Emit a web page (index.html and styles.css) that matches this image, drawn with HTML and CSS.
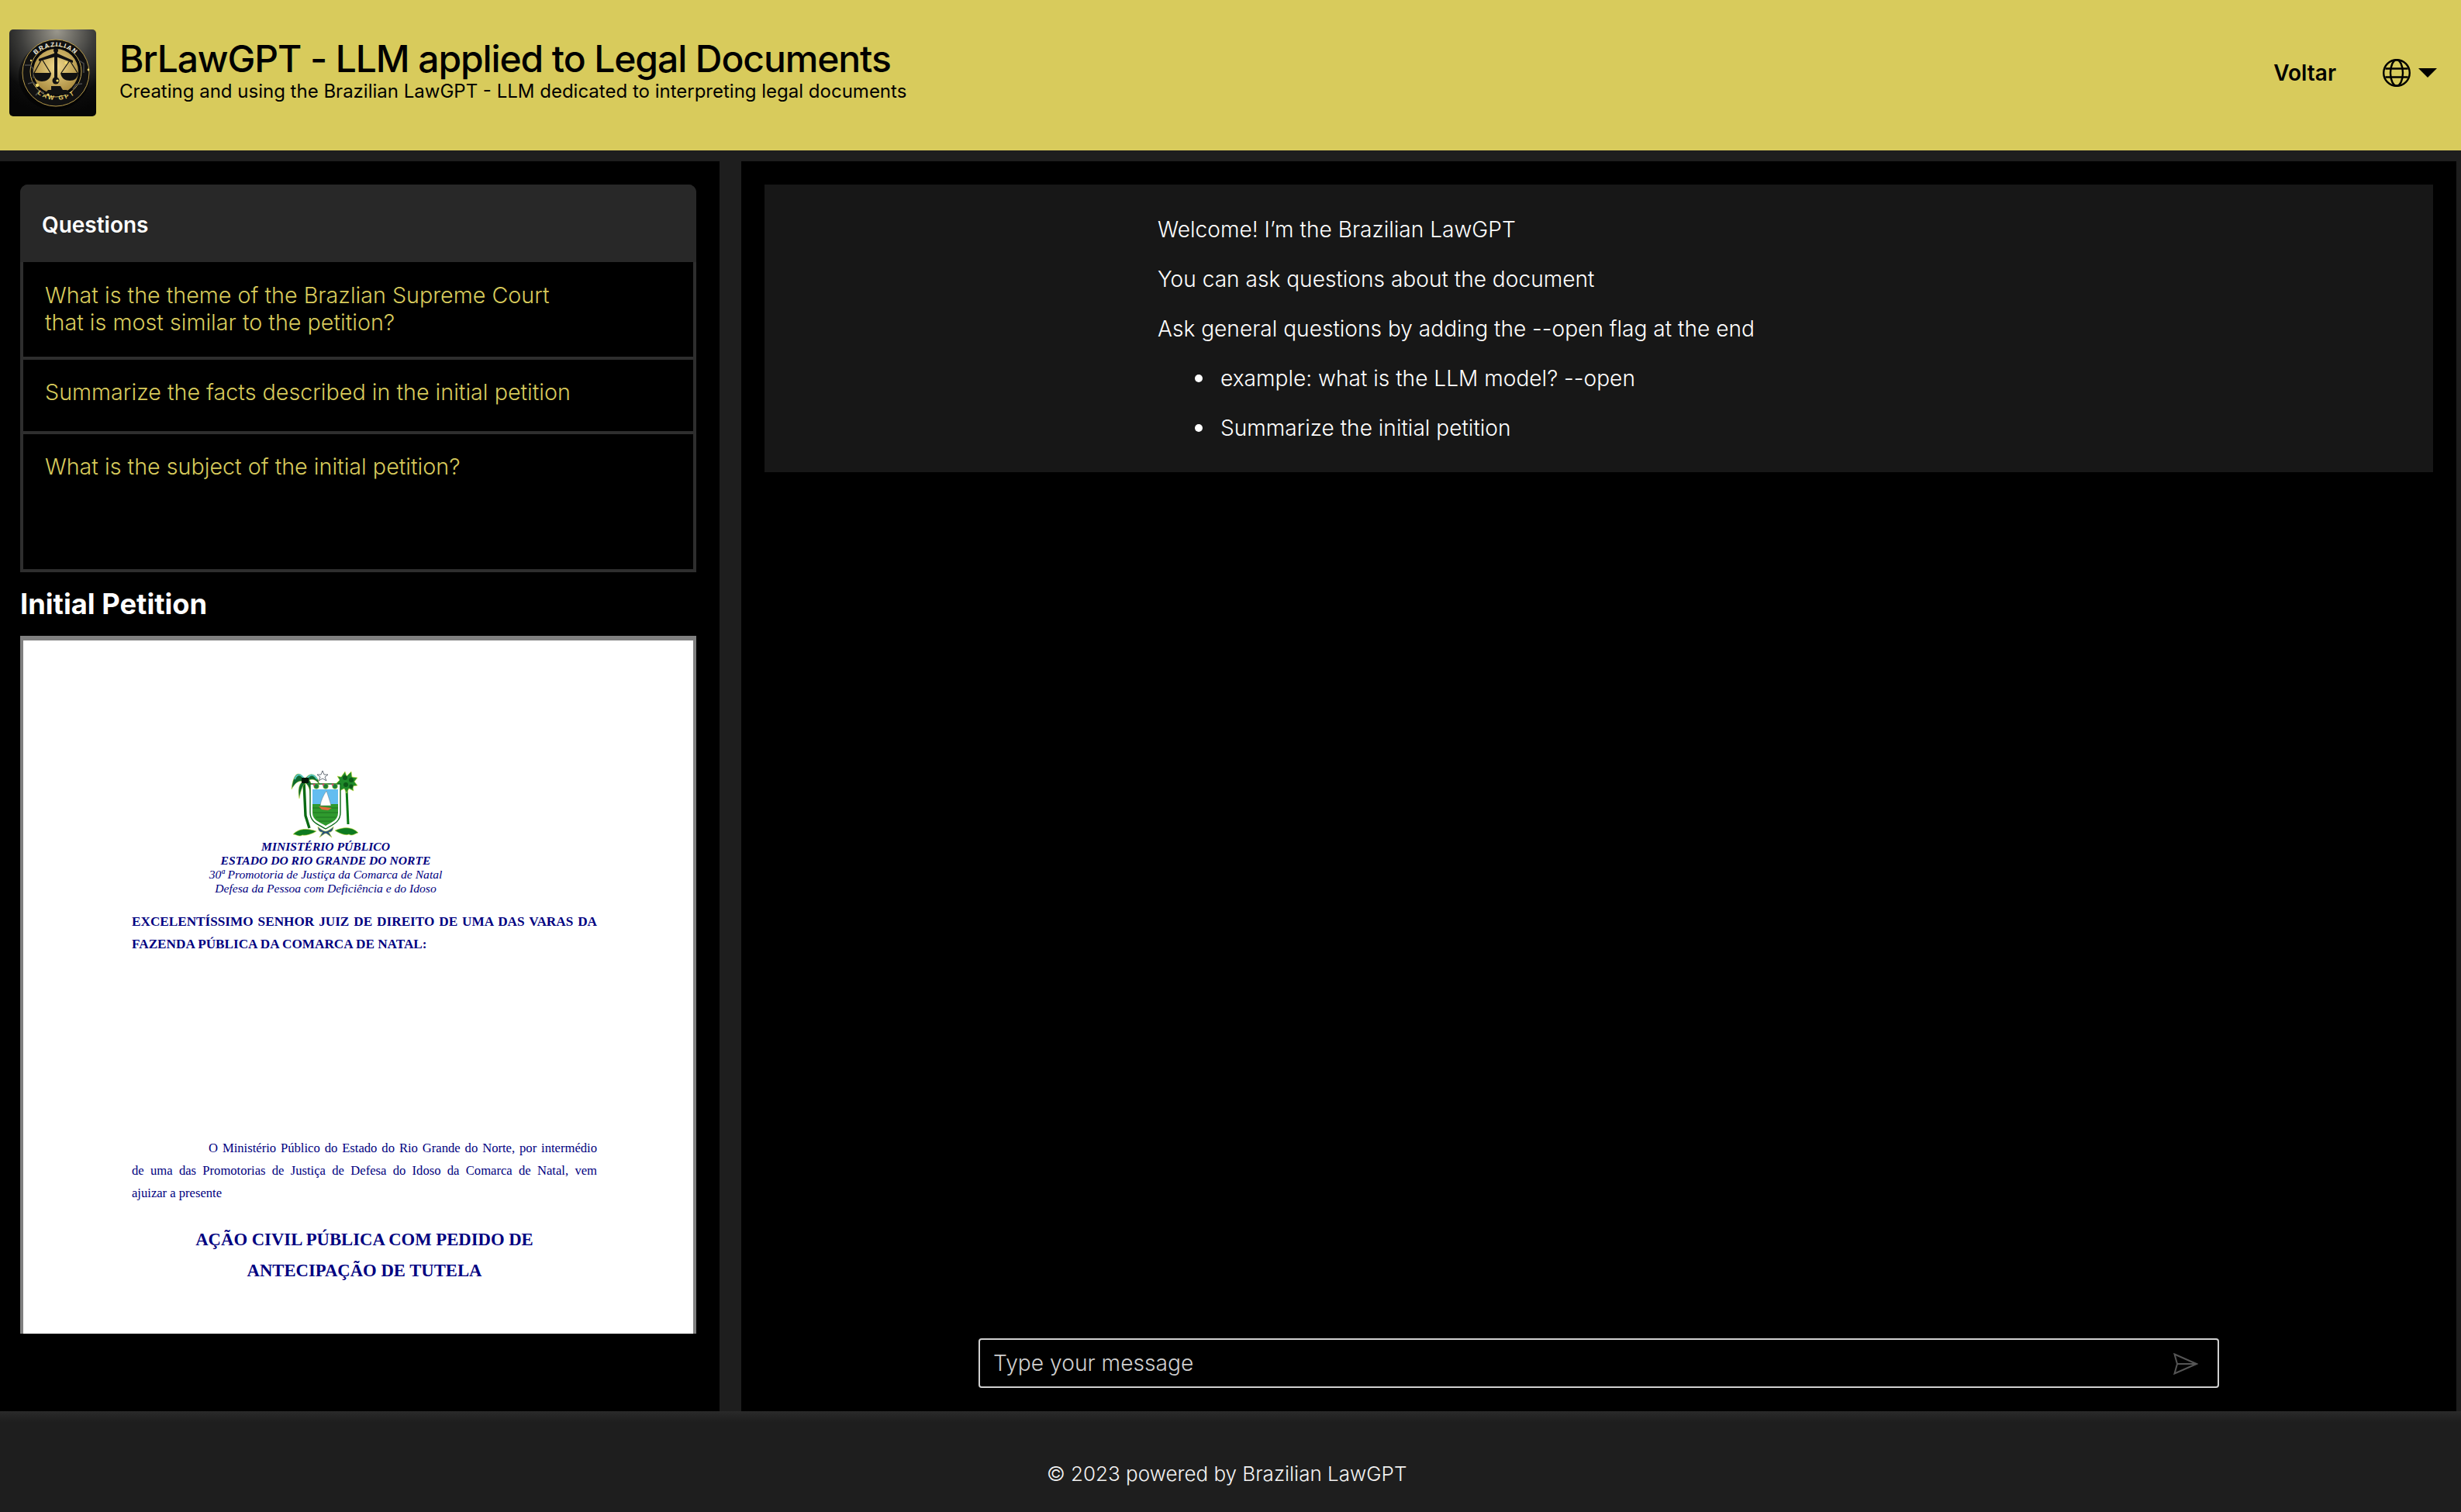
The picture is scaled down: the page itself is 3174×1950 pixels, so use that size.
FILE: index.html
```html
<!DOCTYPE html>
<html lang="en">
<head>
<meta charset="utf-8">
<title>BrLawGPT</title>
<link rel="stylesheet" href="styles.css">
</head>
<body>
<header class="topbar">
  <div class="brand">
    <svg class="logo" viewBox="0 0 112 112" xmlns="http://www.w3.org/2000/svg">
      <defs>
        <radialGradient id="lg-bg" cx="0.55" cy="0.02" r="0.95">
          <stop offset="0" stop-color="#9a978c"/><stop offset="0.45" stop-color="#3d3d3b"/><stop offset="0.8" stop-color="#0c0c0c"/><stop offset="1" stop-color="#060606"/>
        </radialGradient>
        <radialGradient id="lg-gold" cx="0.5" cy="0.4" r="0.6">
          <stop offset="0" stop-color="#f0d98c"/><stop offset="1" stop-color="#a98a3e"/>
        </radialGradient>
        <path id="lg-top" d="M 19 59 A 37 37 0 0 1 93 59"/>
        <path id="lg-bot" d="M 16 50 A 41 41 0 0 0 98 50"/>
      </defs>
      <rect width="112" height="112" rx="5" fill="url(#lg-bg)"/>
      <ellipse cx="58" cy="60" rx="46" ry="44" fill="#000" opacity="0.45"/>
      <circle cx="60" cy="56" r="43" fill="#111" stroke="#b89b4a" stroke-width="1"/>
      <circle cx="60" cy="54" r="33" fill="#0a0a0a" stroke="#c5a955" stroke-width="1"/>
      <path d="M20 46h7l4 5v12M24 70l7-2 5 6M34 85l5-6 6 3M90 40l6 4v12M94 70l-8 1-4 6" fill="none" stroke="#4a4a4a" stroke-width="1.5"/>
      <circle cx="60" cy="54" r="29" fill="url(#lg-gold)"/>
      <g transform="translate(4,0)">
        <g class="logo-text-wrap">
          <text class="logo-text logo-top"><textPath href="#lg-top" startOffset="50%" text-anchor="middle">BRAZILIAN</textPath></text>
          <text class="logo-text logo-bot"><textPath href="#lg-bot" startOffset="50%" text-anchor="middle">LAW GPT</textPath></text>
        </g>
        <g fill="#111">
          <rect x="54" y="28" width="4" height="38"/>
          <path d="M34 38 L56 30 L78 40 L78 43 L56 35 L34 41 Z"/>
          <circle cx="56" cy="27" r="3"/>
          <circle cx="56" cy="66" r="4.5"/>
          <path d="M27 56 H50 C50 64 43 67 38 67 C32 67 28 63 27 56 Z"/>
          <path d="M62 56 H85 C84 63 80 66 74 66 C68 66 63 63 62 56 Z"/>
          <path d="M50 73 H62 L65 78 H70 L76 84 H40 L46 78 H50 Z"/>
        </g>
        <path d="M38 38 L28 56 M38 38 L49 56 M74 40 L63 56 M74 40 L84 56" stroke="#111" stroke-width="1.2" fill="none"/>
        <g fill="#f3dc6b">
          <circle cx="32" cy="72" r="2.2"/><circle cx="46" cy="84" r="1.6"/><circle cx="24" cy="40" r="1.2"/><circle cx="98" cy="52" r="1.4"/><circle cx="69" cy="43" r="1.8"/><circle cx="58" cy="66" r="1.6"/>
        </g>
      </g>
    </svg>
    <div class="brand-text">
      <h1 class="title">BrLawGPT - LLM applied to Legal Documents</h1>
      <p class="subtitle">Creating and using the Brazilian LawGPT - LLM dedicated to interpreting legal documents</p>
    </div>
  </div>
  <nav class="topnav">
    <span class="back">Voltar</span>
    <span class="lang">
      <svg class="globe" viewBox="0 0 36 36" xmlns="http://www.w3.org/2000/svg">
        <circle cx="18" cy="18" r="16.8"/>
        <ellipse cx="18" cy="18" rx="8" ry="16.8"/>
        <path d="M3.4 12.5H32.6M3.4 23.5H32.6"/>
      </svg>
      <svg class="caret" viewBox="0 0 24 12" xmlns="http://www.w3.org/2000/svg"><path d="M0 0H24L12 12Z"/></svg>
    </span>
  </nav>
</header>

<main class="workspace">
  <aside class="sidebar">
    <section class="questions">
      <div class="questions-head">Questions</div>
      <ul class="question-list">
        <li class="question q-two">What is the theme of the Brazlian Supreme Court<br>that is most similar to the petition?</li>
        <li class="question q-one">Summarize the facts described in the initial petition</li>
        <li class="question q-last">What is the subject of the initial petition?</li>
      </ul>
    </section>
    <h2 class="doc-heading">Initial Petition</h2>
    <div class="doc-frame">
      <svg class="arms" viewBox="375 991 90 90" xmlns="http://www.w3.org/2000/svg">
        <path d="M392 1008 L394 1052 L399 1068" fill="none" stroke="#0a6a14" stroke-width="3.4"/>
        <path d="M393 1005 C385 992 378 998 376 1018 C381 1009 386 1006 390 1008 C385 1012 384 1020 386 1030 C388 1018 391 1012 394 1010 C398 1013 400 1019 400 1026 C403 1016 402 1010 399 1006 C404 1004 408 1006 412 1012 C410 1000 401 993 393 1005 Z" fill="#0f6b30" stroke="#d4e43c" stroke-width="0.5"/>
        <path d="M392 1004 C387 997 383 998 380 1005 M396 1004 C401 997 405 999 409 1005" fill="none" stroke="#5ac6c0" stroke-width="2"/>
        <path d="M389 1003 h9 v7 h-9z" fill="#05180a"/>
        <path d="M447 1018 L449 1063" stroke="#0a7a14" stroke-width="3" fill="none"/>
        <g fill="#1f8a2a" stroke="#d4e43c" stroke-width="0.6">
          <path d="M440 1002 l5 -7 l2 6 l6 -6 l1 7 l7 1 l-4 5 l4 5 l-6 1 l1 6 l-6 -3 l-3 6 l-3 -6 l-6 3 l1 -7 l-5 -3 l4 -4 l-3 -5 z"/>
        </g>
        <g fill="#0d5a18"><circle cx="445" cy="1003" r="3"/><circle cx="453" cy="1006" r="3"/><circle cx="446" cy="1012" r="3"/><circle cx="453" cy="1014" r="2.6"/></g>
        <path d="M416 994 L418 999 L423 999 L419 1002 L421 1007 L416 1004 L411 1007 L413 1002 L409 999 L414 999 Z" fill="#fff" stroke="#48505c" stroke-width="0.8"/>
        <path d="M400 1011 H439 V1048 C439 1060 430 1063 420 1069 C410 1063 400 1060 400 1048 Z" fill="#fff" stroke="#0a6a18" stroke-width="1.4"/>
        <path d="M403 1018 H436 V1037 H403 Z" fill="#63bdf0"/>
        <path d="M403 1037 H436 V1048 C436 1058 428 1060 420 1065 C412 1060 403 1058 403 1048 Z" fill="#2f9a2e"/>
        <path d="M403 1042 H436 M404 1048 H436 M407 1054 H433 M411 1059 H429" stroke="#1b6a20" stroke-width="0.8" fill="none"/>
        <path d="M421 1020 C417 1026 414 1032 413 1039 L427 1039 C425 1032 423 1026 421 1020 Z" fill="#fff" stroke="#586060" stroke-width="0.4"/>
        <path d="M411 1040 L428 1042 L423 1045 L415 1044 Z" fill="#e06a3a"/>
        <g fill="#1c7c3a" stroke="#c9e23a" stroke-width="0.5">
          <circle cx="408" cy="1014" r="3.4"/><circle cx="420" cy="1014" r="3.4"/><circle cx="432" cy="1014" r="3.4"/>
        </g>
        <g fill="#d04a6a"><circle cx="405" cy="1012" r="1.4"/><circle cx="417" cy="1012" r="1.4"/><circle cx="429" cy="1012" r="1.4"/></g>
        <path d="M378 1076 C386 1068 396 1068 408 1072 C402 1076 394 1078 390 1077 C386 1080 382 1076 378 1076 Z" fill="#0e7a20" stroke="#c9e23a" stroke-width="0.6"/>
        <path d="M462 1074 C454 1066 444 1066 432 1071 C438 1075 446 1078 450 1076 C454 1079 458 1075 462 1074 Z" fill="#0e7a20" stroke="#c9e23a" stroke-width="0.6"/>
        <path d="M410 1066 C414 1070 418 1072 420 1072 C422 1072 426 1070 430 1066 C430 1072 426 1074 424 1073 L428 1080 L421 1075 L419 1075 L412 1080 L416 1073 C414 1074 410 1072 410 1066 Z" fill="#27507e" stroke="#c9e23a" stroke-width="0.6"/>
      </svg>
      <div class="doc-org">
        <div class="org-strong">MINISTÉRIO PÚBLICO</div>
        <div class="org-strong">ESTADO DO RIO GRANDE DO NORTE</div>
        <div>30ª Promotoria de Justiça da Comarca de Natal</div>
        <div>Defesa da Pessoa com Deficiência e do Idoso</div>
      </div>
      <div class="doc-address">
        <div class="fill-line">EXCELENTÍSSIMO SENHOR JUIZ DE DIREITO DE UMA DAS VARAS DA</div>
        <div>FAZENDA PÚBLICA DA COMARCA DE NATAL:</div>
      </div>
      <div class="doc-para">
        <div class="fill-line para-first">O Ministério Público do Estado do Rio Grande do Norte, por intermédio</div>
        <div class="fill-line">de uma das Promotorias de Justiça de Defesa do Idoso da Comarca de Natal, vem</div>
        <div>ajuizar a presente</div>
      </div>
      <div class="doc-title">
        <div>AÇÃO CIVIL PÚBLICA COM PEDIDO DE</div>
        <div>ANTECIPAÇÃO DE TUTELA</div>
      </div>
    </div>
  </aside>

  <section class="chat">
    <div class="bubble">
      <div class="bubble-body">
        <p class="msg">Welcome! I’m the Brazilian LawGPT</p>
        <p class="msg">You can ask questions about the document</p>
        <p class="msg">Ask general questions by adding the --open flag at the end</p>
        <ul class="msg-list">
          <li class="msg">example: what is the LLM model? --open</li>
          <li class="msg">Summarize the initial petition</li>
        </ul>
      </div>
    </div>
    <form class="composer">
      <input class="composer-input" type="text" placeholder="Type your message">
      <svg class="send" viewBox="0 0 32 28" xmlns="http://www.w3.org/2000/svg">
        <path d="M1.5 1.5 L30 14 L1.5 26.5 L5 14 Z M5 14 H30"/>
      </svg>
    </form>
  </section>
</main>

<footer class="footer">© 2023 powered by Brazilian LawGPT</footer>
</body>
</html>
```

FILE: styles.css
```css
* { box-sizing: border-box; }
html, body { margin: 0; padding: 0; }
body {
  width: 3174px;
  height: 1950px;
  overflow: hidden;
  display: flex;
  flex-direction: column;
  background: #1e1e1e;
  font-family: Inter, "Liberation Sans", sans-serif;
  color: #fff;
}

.topbar {
  height: 194px;
  flex: none;
  display: flex;
  align-items: center;
  justify-content: space-between;
  padding: 0 31px 6px 12px;
  background: #d8cb5c;
  color: #000;
}
.brand { display: flex; align-items: center; gap: 30px; }
.logo { width: 112px; height: 112px; display: block; flex: none; }
.logo-text { font-family: "Liberation Sans", sans-serif; font-weight: 700; fill: #f2efe0; }
.logo-top { font-size: 8px; letter-spacing: 1.6px; }
.logo-bot { font-size: 8px; letter-spacing: 2.4px; fill: #e8cf6a; }
.brand-text { margin-top: -12px; }
.title { margin: 0; font-size: 48px; line-height: 60px; font-weight: 450; letter-spacing: -1.1px; }
.subtitle { margin: 0; font-size: 24px; line-height: 24px; font-weight: 400; }
.topnav { display: flex; align-items: center; gap: 60px; }
.back { font-size: 28px; font-weight: 600; line-height: 36px; }
.lang { display: flex; align-items: center; gap: 10px; }
.globe { width: 36px; height: 36px; display: block; fill: none; stroke: #000; stroke-width: 2.4; }
.caret { width: 24px; height: 12px; display: block; fill: #000; }

.workspace {
  flex: 1;
  min-height: 0;
  display: flex;
  gap: 28px;
  padding: 14px 6px 0 0;
}
.sidebar { width: 928px; flex: none; background: #000; padding: 30px 30px 0 26px; }
.questions { height: 500px; border: 4px solid #2e2e2e; border-radius: 10px 10px 0 0; display: flex; flex-direction: column; }
.questions-head {
  flex: none;
  margin: -4px -4px 0;
  height: 100px;
  padding: 4px 0 0 28px;
  display: flex;
  align-items: center;
  background: #282828;
  border-radius: 10px 10px 0 0;
  font-size: 28px;
  font-weight: 600;
}
.question-list { list-style: none; margin: 0; padding: 0; }
.question { padding-left: 28px; color: #d8cb5c; font-size: 28.7px; font-weight: 300; line-height: 35px; border-bottom: 4px solid #2e2e2e; }
.q-two { height: 126px; padding-top: 25px; }
.q-one { height: 96px; padding-top: 24px; }
.q-last { border-bottom: 0; padding-top: 24px; }
.doc-heading { margin: 20px 0 0; font-size: 36.3px; line-height: 42px; font-weight: 700; color: #fff; }
.doc-frame {
  margin-top: 20px;
  height: 900px;
  background: #fff;
  border: solid #808080;
  border-width: 6px 4px 0 4px;
  padding: 0 0 0 140px;
  overflow: hidden;
  font-family: "Liberation Serif", serif;
  color: #000080;
}
.arms { display: block; width: 90px; height: 90px; margin: 165px 0 0 205px; }
.doc-org { width: 500px; margin-top: 2px; text-align: center; font-size: 15.6px; line-height: 18px; font-style: italic; }
.org-strong { font-weight: 700; }
.doc-address { width: 600px; margin-top: 19px; font-size: 17.2px; line-height: 29px; font-weight: 700; }
.fill-line { text-align: justify; text-align-last: justify; white-space: nowrap; }
.doc-para { width: 600px; margin-top: 234px; font-size: 16.6px; line-height: 29px; }
.para-first { padding-left: 99px; }
.doc-title { width: 600px; margin-top: 26px; font-size: 22.7px; line-height: 40px; font-weight: 700; text-align: center; }

.chat {
  flex: 1;
  min-width: 0;
  background: #000;
  padding: 30px 30px 30px;
  display: flex;
  flex-direction: column;
}
.bubble { height: 371px; background: #171717; padding: 40px 0 0 507px; flex: none; }
.msg { margin: 0 0 28px; font-size: 28.1px; font-weight: 300; line-height: 36px; color: #fff; }
.msg-list { margin: 0; padding: 0 0 0 81px; list-style: none; }
.msg-list .msg { position: relative; }
.msg-list .msg::before {
  content: "";
  position: absolute;
  left: -33px;
  top: 13px;
  width: 10px;
  height: 10px;
  border-radius: 50%;
  background: #fff;
}
.composer { position: relative; width: 1600px; height: 64px; margin: auto 0 0 276px; }
.composer-input {
  width: 100%;
  height: 100%;
  background: #000;
  border: 2px solid #d0d0d0;
  border-radius: 4px;
  padding: 0 80px 0 17px;
  color: #fff;
  font: 300 28.2px Inter, "Liberation Sans", sans-serif;
  outline: none;
}
.composer-input::placeholder { color: #cfcfcf; opacity: 1; }
.send {
  position: absolute;
  right: 27px;
  top: 19px;
  width: 32px;
  height: 28px;
  fill: none;
  stroke: #555;
  stroke-width: 2;
}

.footer {
  height: 130px;
  flex: none;
  padding: 66px 0 0 1350px;
  background: linear-gradient(#2a2a2a, #1e1e1e 14px);
  font-size: 26px;
  font-weight: 300;
  line-height: 30px;
  color: #f2f2f2;
}
```
